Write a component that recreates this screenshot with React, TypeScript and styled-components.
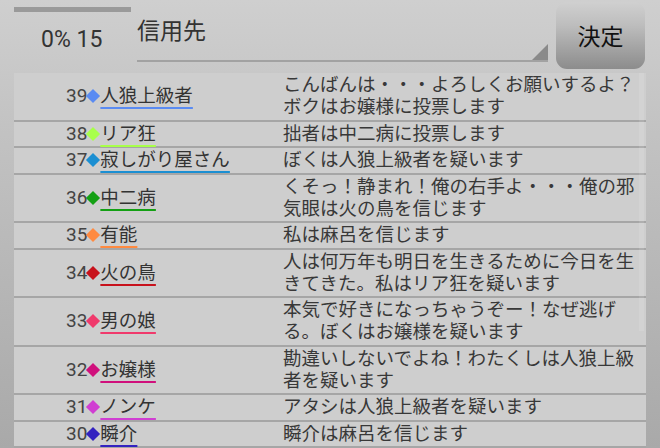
import React from "react";
import styled, { createGlobalStyle } from "styled-components";

const Global = createGlobalStyle`
  html, body { margin: 0; padding: 0; }
  body {
    width: 660px;
    height: 448px;
    overflow: hidden;
    font-family: Roboto, "Noto Sans CJK JP", "Noto Sans", sans-serif;
  }
`;

const Screen = styled.div`
  width: 660px;
  height: 448px;
  overflow: hidden;
  background: linear-gradient(#cfcfcf 0%, #c2c2c2 30%, #a9a9a9 100%);
  display: flex;
  flex-direction: column;
`;

const Header = styled.div`
  height: 73px;
  display: flex;
  padding: 0 15px 0 14px;
  box-sizing: border-box;
  flex-shrink: 0;
`;

const LeftBlock = styled.div`
  width: 123px;
  display: flex;
  flex-direction: column;
`;

const Progress = styled.div`
  margin-top: 7px;
  width: 117px;
  height: 5px;
  background: #9a9a9a;
`;

const Counter = styled.div`
  margin-top: 14px;
  padding-left: 27px;
  font-size: 23px;
  line-height: 28px;
  color: #333;
`;

const Spinner = styled.div`
  position: relative;
  width: 411px;
  border-bottom: 2px solid #a2a2a2;
  font-size: 23px;
  line-height: 28px;
  color: #333;
  padding-top: 18px;
  height: 42px;
  &::after {
    content: "";
    position: absolute;
    right: 0;
    bottom: 0;
    width: 0;
    height: 0;
    border-left: 16px solid transparent;
    border-bottom: 16px solid #8a8a8a;
  }
`;

const Button = styled.div`
  margin-left: 8px;
  margin-top: 2px;
  width: 89px;
  height: 67px;
  border-radius: 11px;
  background: linear-gradient(#d0d0d0 0%, #bdbdbd 35%, #8c8c8c 100%);
  display: flex;
  align-items: center;
  justify-content: center;
  font-size: 23px;
  color: #111;
  padding-bottom: 2px;
  box-sizing: border-box;
`;

const Table = styled.div`
  position: relative;
  margin: 0 14px;
  background: #cecece;
  flex: 1;
`;

const Row = styled.div`
  display: grid;
  grid-template-columns: 269px 1fr;
  padding: 1px 0 1.5px;
  border-bottom: 2px solid #a6a6a6;
`;

const NameCell = styled.div`
  display: flex;
  align-items: center;
  padding-left: 52px;
  font-size: 18.5px;
  line-height: 22px;
  color: #444;
`;

const Num = styled.span`
  font-size: 19px;
`;

const Diamond = styled.span<{ $c: string }>`
  display: inline-block;
  width: 10px;
  height: 10px;
  margin: 0 2px 0 1px;
  background: ${(p) => p.$c};
  transform: rotate(45deg);
`;

const Name = styled.span<{ $c: string }>`
  color: #333;
  text-decoration: underline;
  text-decoration-color: ${(p) => p.$c};
  text-decoration-thickness: 2px;
  text-underline-offset: 5px;
`;

const Msg = styled.div`
  font-size: 18.5px;
  line-height: 22px;
  color: #383838;
  padding-right: 4px;
  line-break: strict;
`;

const Thumb = styled.div`
  position: absolute;
  right: 2px;
  top: 0;
  width: 5px;
  height: 258px;
  background: rgba(255, 255, 255, 0.1);
`;

const rows = [
  { n: 39, name: "人狼上級者", c: "#5a8bf2", msg: "こんばんは・・・よろしくお願いするよ？ボクはお嬢様に投票します" },
  { n: 38, name: "リア狂", c: "#a8ff4a", msg: "拙者は中二病に投票します" },
  { n: 37, name: "寂しがり屋さん", c: "#1b8fd2", msg: "ぼくは人狼上級者を疑います" },
  { n: 36, name: "中二病", c: "#14a014", msg: "くそっ！静まれ！俺の右手よ・・・俺の邪気眼は火の鳥を信じます" },
  { n: 35, name: "有能", c: "#ff8a40", msg: "私は麻呂を信じます" },
  { n: 34, name: "火の鳥", c: "#c8121c", msg: "人は何万年も明日を生きるために今日を生きてきた。私はリア狂を疑います" },
  { n: 33, name: "男の娘", c: "#f03a6c", msg: "本気で好きになっちゃうぞー！なぜ逃げる。ぼくはお嬢様を疑います" },
  { n: 32, name: "お嬢様", c: "#d0107c", msg: "勘違いしないでよね！わたくしは人狼上級者を疑います" },
  { n: 31, name: "ノンケ", c: "#d03ed2", msg: "アタシは人狼上級者を疑います" },
  { n: 30, name: "瞬介", c: "#3322c0", msg: "瞬介は麻呂を信じます" },
];

export default function App() {
  return (
    <Screen>
      <Global />
      <Header>
        <LeftBlock>
          <Progress />
          <Counter>0% 15</Counter>
        </LeftBlock>
        <Spinner>信用先</Spinner>
        <Button>決定</Button>
      </Header>
      <Table>
        {rows.map((r) => (
          <Row key={r.n}>
            <NameCell>
              <Num>{r.n}</Num>
              <Diamond $c={r.c} />
              <Name $c={r.c}>{r.name}</Name>
            </NameCell>
            <Msg>{r.msg}</Msg>
          </Row>
        ))}
        <Thumb />
      </Table>
    </Screen>
  );
}
